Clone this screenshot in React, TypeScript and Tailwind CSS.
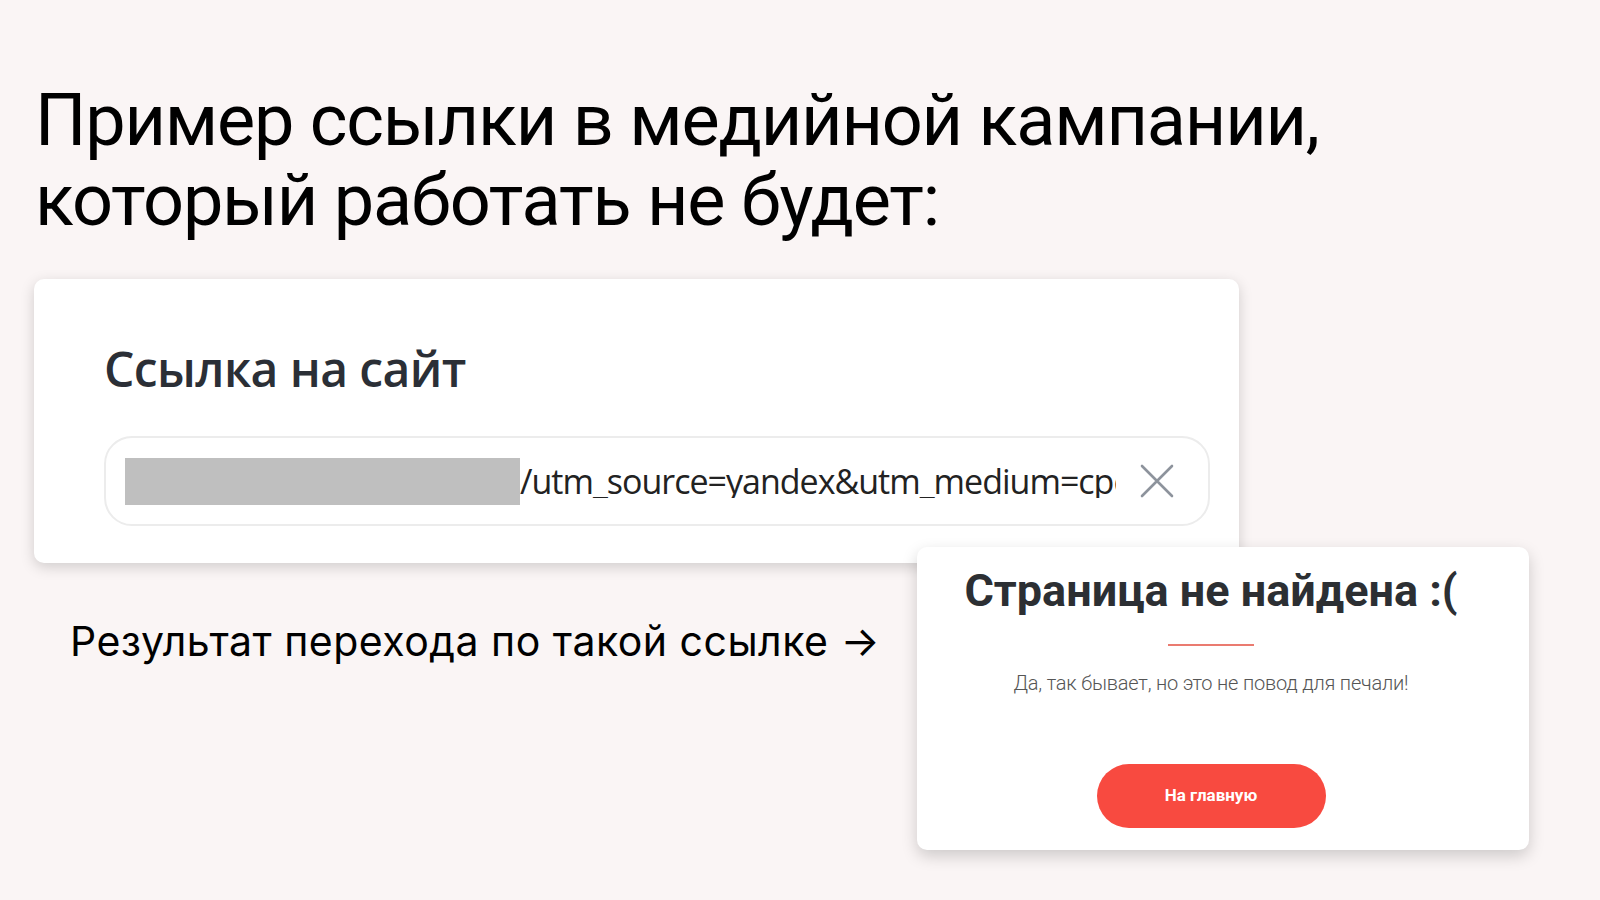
const CrossIcon = () => (
  <svg width="34" height="34" viewBox="0 0 34 34" fill="none">
    <path d="M2 2L32 32M32 2L2 32" stroke="#8d939c" strokeWidth="2.6" strokeLinecap="round" />
  </svg>
);

const App = () => {
  return (
    <div className="min-h-screen w-full overflow-hidden bg-[#faf5f5] font-['Inter',sans-serif]">
      {/* Title */}
      <h1 className="pl-[35px] pt-[81px] font-['Roboto',sans-serif] text-[72px] leading-[80px] font-normal tracking-[-1.2px] text-black">
        Пример ссылки в медийной кампании,
        <br />
        который работать не будет:
      </h1>

      {/* Link field card */}
      <section className="ml-[34px] mt-[38px] h-[284px] w-[1205px] rounded-[10px] bg-white pl-[70px] pr-[29px] pt-[66px] shadow-[0_4px_14px_rgba(0,0,0,0.17)]">
        <h2 className="font-['Open_Sans',sans-serif] text-[48px] font-semibold leading-none tracking-[-0.6px] text-[#2b2f36]">
          Ссылка на сайт
        </h2>
        <div className="mt-[43px] flex h-[90px] items-center rounded-[28px] border-2 border-[#ececec] pl-[19px] pr-[34px]">
          <div className="h-[47px] w-[395px] shrink-0 bg-[#bfbfbf]" />
          <div className="min-w-0 flex-1 overflow-hidden whitespace-nowrap font-['Open_Sans',sans-serif] text-[34px] leading-none tracking-[-1px] text-[#222]">
            /utm_source=yandex&amp;utm_medium=cpc
          </div>
          <div className="ml-[24px] shrink-0">
            <CrossIcon />
          </div>
        </div>
      </section>

      {/* Result row */}
      <div className="flex items-start">
        <div className="w-[917px] shrink-0 pl-[70px] pt-[58px]">
          <p className="text-[41px] leading-none tracking-[0.5px] text-black">
            Результат перехода по такой ссылке →
          </p>
        </div>

        <section className="relative z-10 -mt-[16px] h-[303px] w-[612px] shrink-0 rounded-[10px] bg-white pr-[24px] pt-[21px] shadow-[0_6px_16px_rgba(0,0,0,0.18)]">
          <div className="flex w-[588px] flex-col items-center font-['Roboto',sans-serif]">
            <h3 className="whitespace-nowrap text-[45px] font-bold leading-none text-[#2c2f33]">
              Страница не найдена :(
            </h3>
            <div className="mt-[31px] h-[2px] w-[86px] bg-[#ea7b70]" />
            <p className="mt-[27px] text-[20px] font-light leading-none tracking-[-0.2px] text-[#555]">
              Да, так бывает, но это не повод для печали!
            </p>
            <button
              type="button"
              className="mt-[71px] flex h-[64px] w-[229px] items-center justify-center rounded-full bg-[#f84a40] text-[17px] font-bold text-white"
            >
              На главную
            </button>
          </div>
        </section>
      </div>
    </div>
  );
};

export default App;
